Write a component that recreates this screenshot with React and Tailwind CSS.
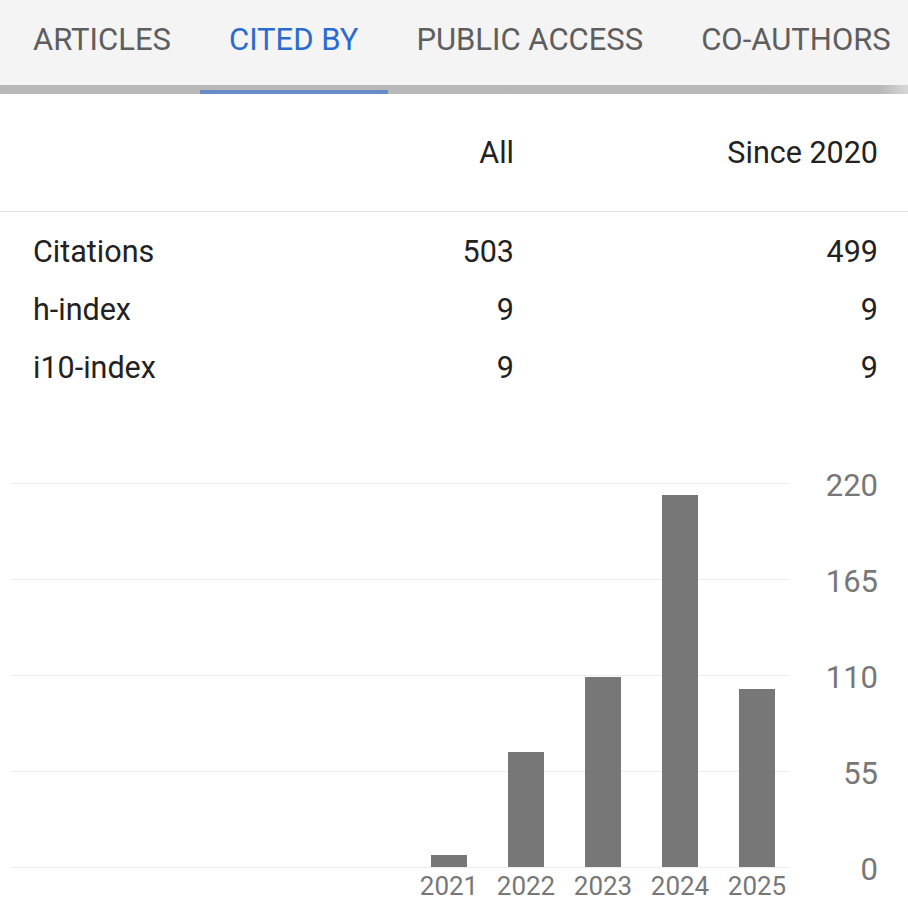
const tabs = ['ARTICLES', 'CITED BY', 'PUBLIC ACCESS', 'CO-AUTHORS'];

const stats = [
  { label: 'Citations', all: '503', since: '499' },
  { label: 'h-index', all: '9', since: '9' },
  { label: 'i10-index', all: '9', since: '9' },
];

const years = [
  { year: '2021', value: 7 },
  { year: '2022', value: 66 },
  { year: '2023', value: 109 },
  { year: '2024', value: 213 },
  { year: '2025', value: 102 },
];

const ticks = ['220', '165', '110', '55', '0'];
const PLOT_H = 384;

export default function App() {
  return (
    <div className="w-[908px] h-[913px] overflow-hidden bg-white font-['Roboto',sans-serif]">
      {/* tabs */}
      <div className="h-[85px] bg-[#f4f4f4] flex items-center pl-[4px] pb-[4px] whitespace-nowrap overflow-hidden">
        {tabs.map((t, i) => (
          <div
            key={t}
            className={`shrink-0 px-[29px] text-[31px] ${i === 1 ? 'text-[#2b6bd0]' : 'text-[#5e5e5e]'}`}
          >
            {t}
          </div>
        ))}
      </div>
      <div className="h-[9px] bg-gradient-to-r from-[#b8b8b8] from-[97%] to-[#d8d8d8] flex items-end">
        <div className="ml-[200px] w-[188px] h-[4px] bg-[#6a8cc4]" />
      </div>

      {/* stats table */}
      <div className="text-[30.5px] text-[#222] leading-[58px]">
        <div className="flex pl-[33px] pr-[30px] pt-[30px] pb-[29px] border-b border-[#e2e2e2]">
          <div className="flex-1" />
          <div className="w-[184px] text-right">All</div>
          <div className="w-[364px] text-right">Since 2020</div>
        </div>
        <div className="pt-[11px]">
          {stats.map((s) => (
            <div key={s.label} className="flex pl-[33px] pr-[30px]">
              <div className="flex-1">{s.label}</div>
              <div className="w-[184px] text-right">{s.all}</div>
              <div className="w-[364px] text-right">{s.since}</div>
            </div>
          ))}
        </div>
      </div>

      {/* chart */}
      <div className="mt-[75px] flex items-start">
        <div className="ml-[10px] w-[779px] pt-[11px]">
          <div className="relative h-[385px] flex items-end justify-end gap-[41px] pr-[14px] pb-px">
            <div className="absolute inset-0 flex flex-col justify-between">
              {ticks.map((t) => (
                <div key={t} className="h-px bg-[#ececec]" />
              ))}
            </div>
            {years.map((y) => (
              <div
                key={y.year}
                className="relative w-[36px] bg-[#777777]"
                style={{ height: Math.round((y.value * PLOT_H) / 220) }}
              />
            ))}
          </div>
          <div className="flex justify-end gap-[41px] pr-[14px] mt-[3px]">
            {years.map((y) => (
              <div
                key={y.year}
                className="w-[36px] flex justify-center whitespace-nowrap text-[26px] leading-[30px] text-[#777]"
              >
                {y.year}
              </div>
            ))}
          </div>
        </div>
        <div className="flex-1 pr-[30px] flex flex-col gap-[68px] text-right text-[31px] leading-[28px] text-[#777]">
          {ticks.map((t) => (
            <div key={t} className="h-[28px]">
              {t}
            </div>
          ))}
        </div>
      </div>
    </div>
  );
}
